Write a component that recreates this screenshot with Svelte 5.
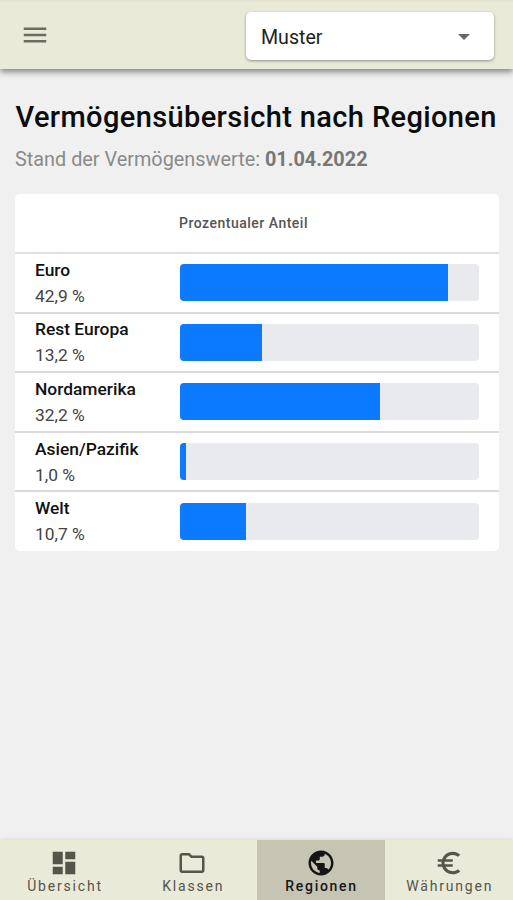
<script>
  const rows = [
    { name: 'Euro', value: '42,9 %', fill: 89.5 },
    { name: 'Rest Europa', value: '13,2 %', fill: 27.6 },
    { name: 'Nordamerika', value: '32,2 %', fill: 67.1 },
    { name: 'Asien/Pazifik', value: '1,0 %', fill: 2.1 },
    { name: 'Welt', value: '10,7 %', fill: 22.3 }
  ];

  const tabs = [
    { label: 'Übersicht', icon: 'M3 13h8V3H3v10zm0 8h8v-6H3v6zm10 0h8V11h-8v10zm0-18v6h8V3h-8z' },
    { label: 'Klassen', icon: 'M9.17 6l2 2H20v10H4V6h5.17M10 4H4c-1.1 0-1.99.9-1.99 2L2 18c0 1.1.9 2 2 2h16c1.1 0 2-.9 2-2V8c0-1.1-.9-2-2-2h-8l-2-2z' },
    { label: 'Regionen', active: true, icon: 'M12 2C6.48 2 2 6.48 2 12s4.48 10 10 10 10-4.48 10-10S17.52 2 12 2zm-1 17.93c-3.95-.49-7-3.85-7-7.93 0-.62.08-1.21.21-1.79L9 15v1c0 1.1.9 2 2 2v1.93zm6.9-2.54c-.26-.81-1-1.39-1.9-1.39h-1v-3c0-.55-.45-1-1-1H8v-2h2c.55 0 1-.45 1-1V7h2c1.1 0 2-.9 2-2v-.41c2.93 1.19 5 4.06 5 7.41 0 2.08-.8 3.97-2.1 5.39z' },
    { label: 'Währungen', icon: 'M15 18.5c-2.51 0-4.68-1.42-5.76-3.5H15v-2H8.58c-.05-.33-.08-.66-.08-1s.03-.67.08-1H15V9H9.24C10.32 6.92 12.5 5.5 15 5.5c1.61 0 3.09.59 4.23 1.57L21 5.3C19.41 3.87 17.3 3 15 3c-3.92 0-7.24 2.51-8.48 6H3v2h3.06c-.04.33-.06.66-.06 1s.02.67.06 1H3v2h3.52c1.24 3.49 4.56 6 8.48 6 2.31 0 4.41-.87 6-2.3l-1.78-1.77c-1.13.98-2.6 1.57-4.22 1.57z' }
  ];
</script>

<div class="app">
  <header>
    <button class="menu" aria-label="Menü">
      <svg viewBox="0 0 24 24"><path d="M3 18h18v-2H3v2zm0-5h18v-2H3v2zm0-7v2h18V6H3z" /></svg>
    </button>
    <button class="select">
      <span>Muster</span>
      <svg viewBox="0 0 12 6"><path d="M0 0h12L6 6z" /></svg>
    </button>
  </header>

  <main>
    <h1>Vermögensübersicht nach Regionen</h1>
    <p class="date">Stand der Vermögenswerte: <b>01.04.2022</b></p>

    <section class="card">
      <div class="head"><span>Prozentualer Anteil</span></div>
      {#each rows as row}
        <div class="row">
          <div class="label">
            <strong>{row.name}</strong>
            <span>{row.value}</span>
          </div>
          <div class="track"><div class="fill" style="width: {row.fill}%"></div></div>
        </div>
      {/each}
    </section>
  </main>

  <nav>
    {#each tabs as tab}
      <button class="tab" class:active={tab.active}>
        <svg viewBox="0 0 24 24"><path d={tab.icon} /></svg>
        <span>{tab.label}</span>
      </button>
    {/each}
  </nav>
</div>

<style>
  :global(body) { margin: 0; }
  .app {
    height: 900px;
    display: flex;
    flex-direction: column;
    overflow: hidden;
    background: #f0f0f0;
    font-family: Roboto, "Liberation Sans", sans-serif;
    color: #111;
  }
  button { border: 0; padding: 0; background: none; font: inherit; color: inherit; }
  header {
    flex: none;
    box-sizing: border-box;
    height: 69px;
    padding: 12px 19px 0 20px;
    display: flex;
    justify-content: space-between;
    align-items: flex-start;
    background: linear-gradient(#e2e0cd, #eaead8 3px);
    box-shadow: 0 3px 6px rgba(0, 0, 0, 0.45);
  }
  .menu { margin-top: 8px; width: 30px; height: 30px; }
  .menu svg { display: block; width: 30px; height: 30px; fill: #6b6b5e; }
  .select {
    box-sizing: border-box;
    width: 248px;
    height: 48px;
    padding: 2px 24px 0 15px;
    display: flex;
    align-items: center;
    justify-content: space-between;
    background: #fff;
    border-radius: 5px;
    box-shadow: 0 1px 3px rgba(0, 0, 0, 0.4);
    font-size: 19.6px;
    color: #222;
  }
  .select svg { width: 12px; height: 6px; fill: #666; }
  main { flex: 1; padding: 28px 14px 0 15px; }
  h1 {
    margin: 0 0 0 0.5px;
    font-size: 29px;
    line-height: 40px;
    font-weight: 500;
    letter-spacing: 0.37px;
    white-space: nowrap;
    color: #0c0c0c;
  }
  .date {
    margin: 8px 0 0;
    font-size: 19.85px;
    line-height: 30px;
    color: #8a8a8a;
    white-space: nowrap;
  }
  .date b { font-weight: 700; color: #777; }
  .card {
    margin-top: 19px;
    background: #fff;
    border-radius: 5px;
    overflow: hidden;
  }
  .head {
    height: 58px;
    padding-left: 164px;
    line-height: 58px;
    font-size: 14px;
    font-weight: 500;
    letter-spacing: 0.5px;
    color: #555;
    border-bottom: 2px solid #e0e0e0;
  }
  .row {
    box-sizing: border-box;
    height: 59.6px;
    padding: 0 20px;
    display: flex;
    align-items: center;
    border-bottom: 2px solid #dadada;
  }
  .row:last-child { height: 58.6px; padding-bottom: 0.6px; border: 0; }
  .label {
    width: 144.5px;
    display: flex;
    flex-direction: column;
    font-size: 17.4px;
    line-height: 26px;
  }
  .label strong { font-weight: 500; }
  .label span { color: #444; }
  .track {
    flex: 1;
    height: 37px;
    background: #e9eaed;
    border-radius: 4px;
    overflow: hidden;
  }
  .fill { height: 100%; background: #0b7aff; }
  nav {
    flex: none;
    display: flex;
    height: 60px;
    background: #eaead8;
    box-shadow: 0 0 5px rgba(0, 0, 0, 0.12);
  }
  .tab {
    flex: 1;
    display: flex;
    flex-direction: column;
    align-items: center;
    padding-top: 8px;
    font-size: 14px;
    line-height: 17px;
    letter-spacing: 1.8px;
    color: #55554a;
  }
  .tab svg { width: 30px; height: 30px; fill: currentColor; }
  .tab span { margin-right: -1.8px; }
  .active { background: #c6c5b4; color: #151515; }
  .active span { font-weight: 500; letter-spacing: 1.7px; }
</style>
